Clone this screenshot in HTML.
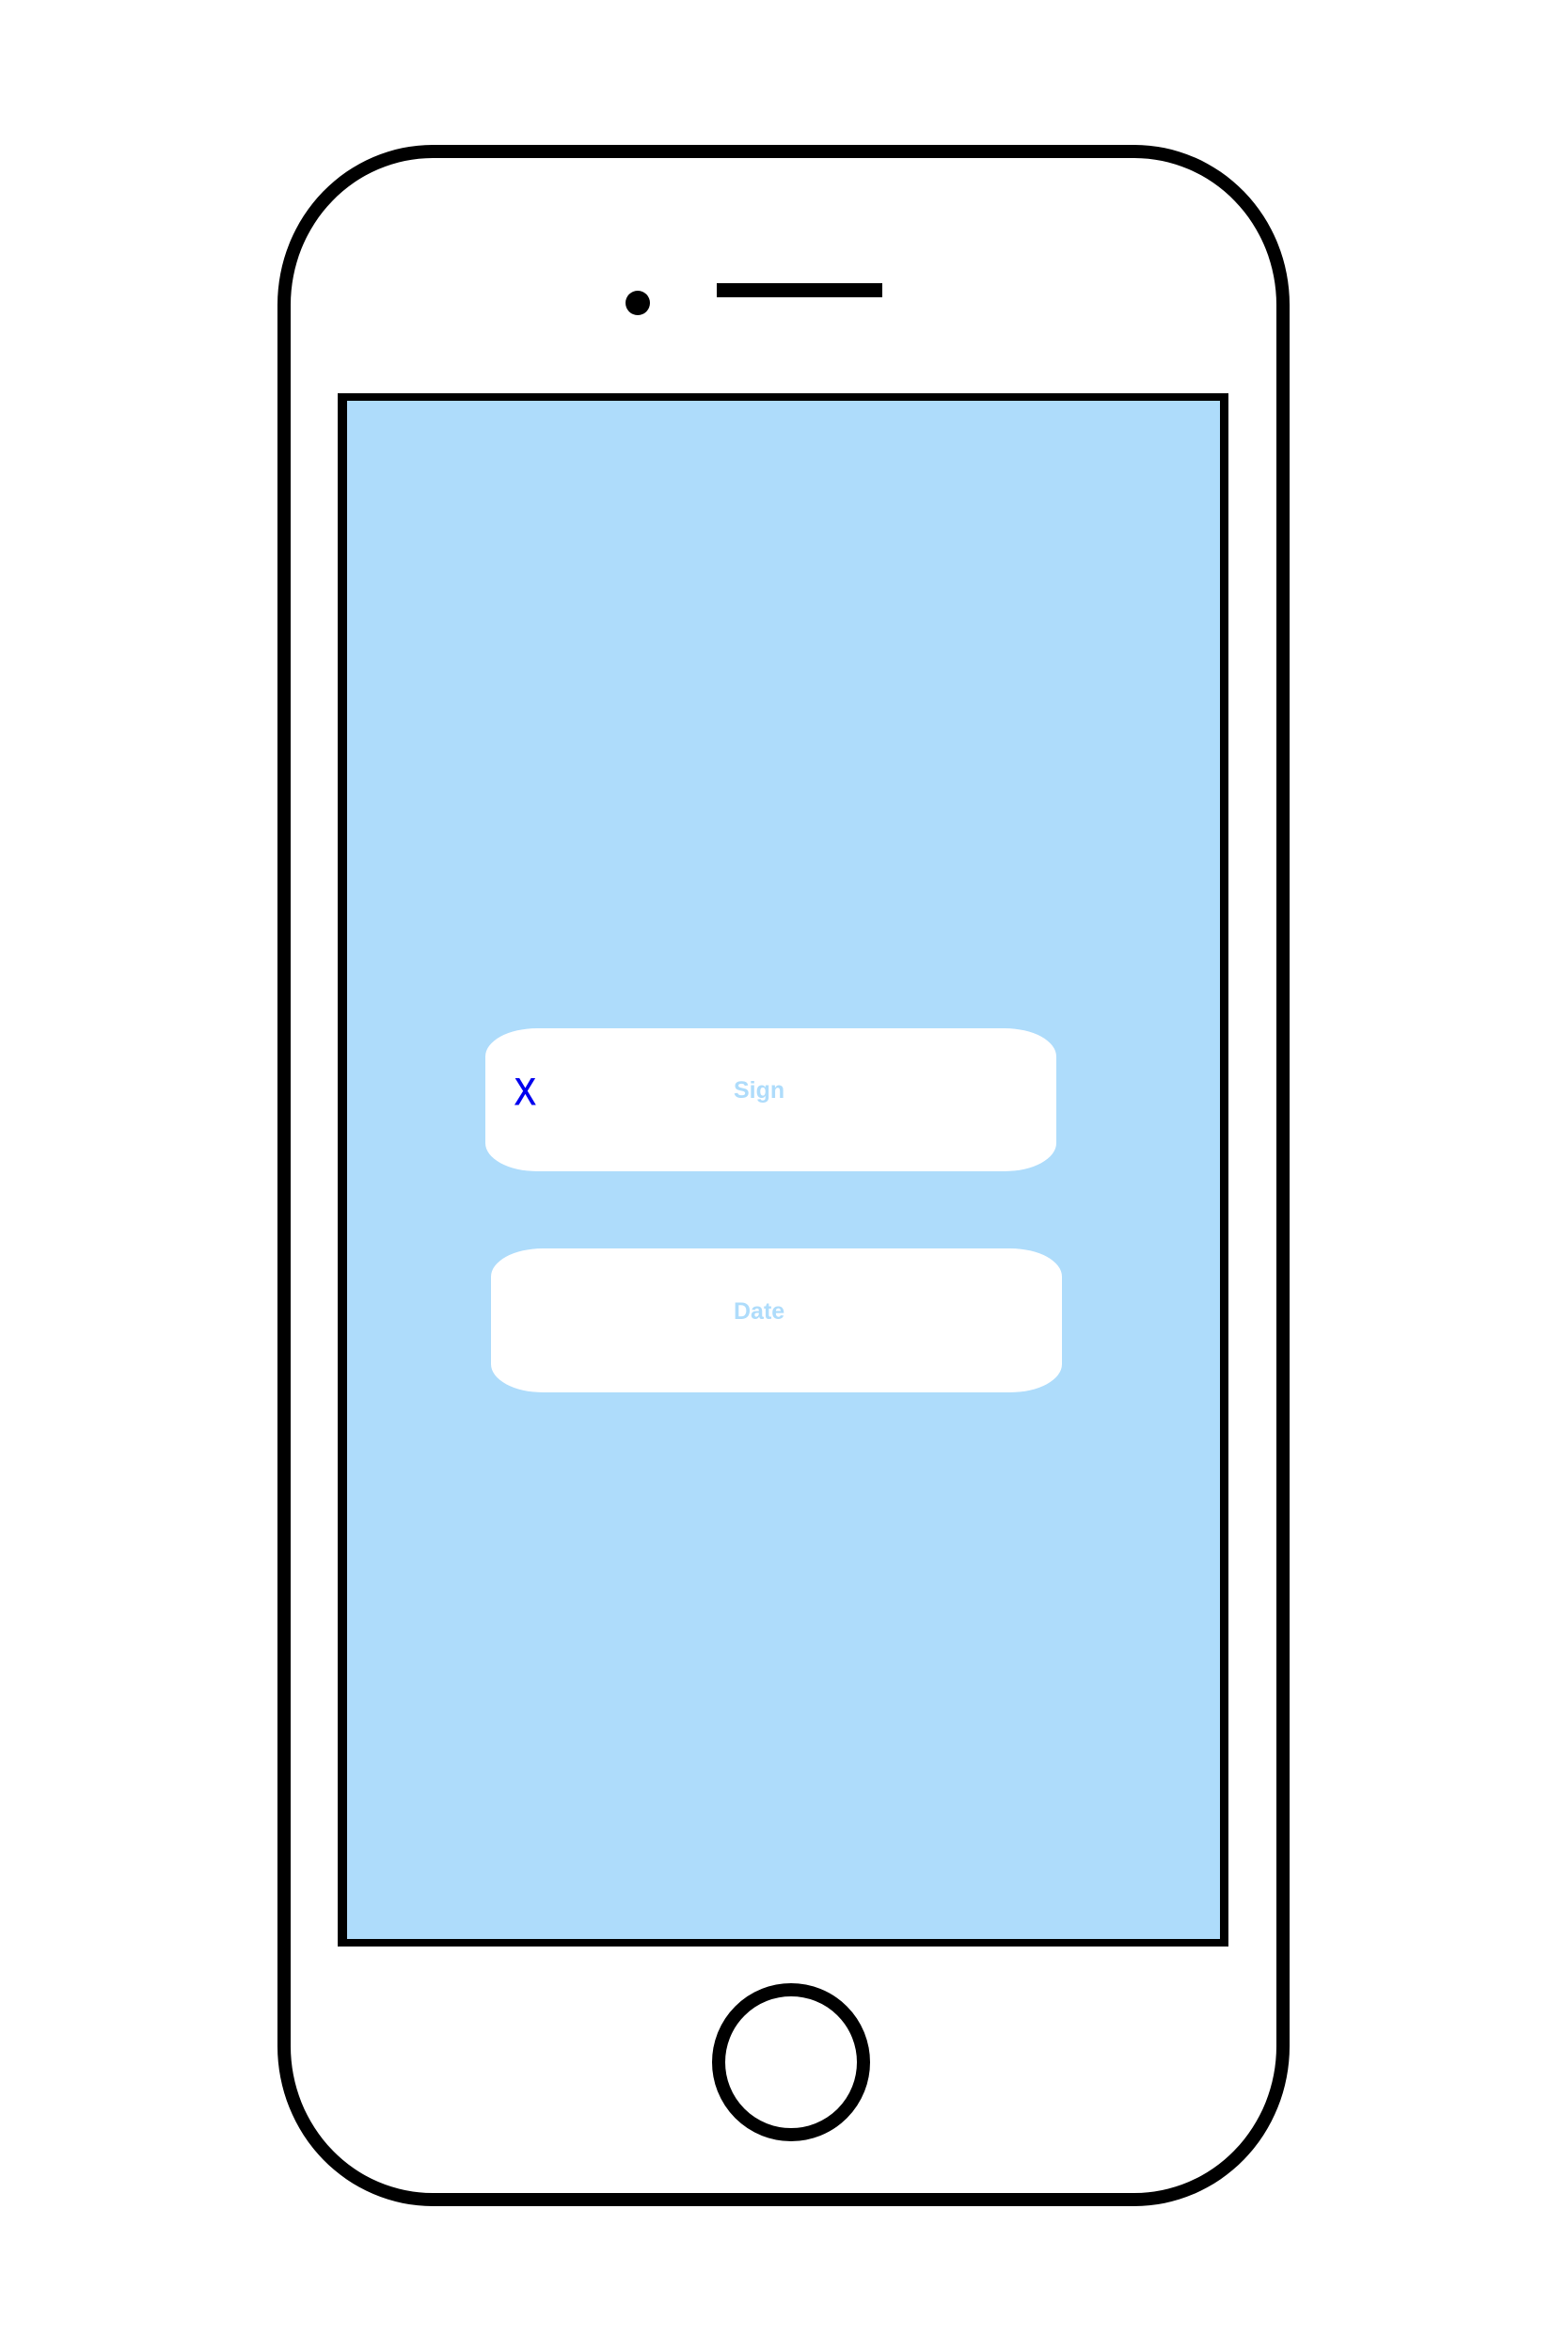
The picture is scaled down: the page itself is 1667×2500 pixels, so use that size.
<!DOCTYPE html>
<html><head><meta charset="utf-8"><style>
html,body{margin:0;padding:0;background:#fff;width:1667px;height:2500px;overflow:hidden;position:relative;font-family:"Liberation Sans",sans-serif}
.a{position:absolute;box-sizing:border-box}
</style></head><body>
<div class="a" style="left:295px;top:154px;width:1076px;height:2191px;border:14px solid #000;border-radius:165px/170px;"></div>
<div class="a" style="left:665px;top:309px;width:26px;height:26px;border-radius:50%;background:#000"></div>
<div class="a" style="left:762px;top:301px;width:176px;height:15px;background:#000"></div>
<div class="a" style="left:359px;top:418px;width:947px;height:1651px;border:8px solid #000;border-left-width:10px;border-right-width:9px;background:#aedcfb"></div>
<div class="a" style="left:516px;top:1093px;width:607px;height:152px;background:#fff;border-radius:55px/30px"></div>
<div class="a" style="left:522px;top:1327px;width:607px;height:153px;background:#fff;border-radius:55px/30px"></div>
<div class="a" style="left:547px;top:1138px;font-size:40px;line-height:46px;color:#0000ee;transform:scaleX(0.85);transform-origin:left;-webkit-text-stroke:1px #0000ee">X</div>
<div class="a" style="left:780px;top:1145px;font-size:25px;line-height:28px;font-weight:bold;color:#aedcfb">Sign</div>
<div class="a" style="left:780px;top:1380px;font-size:25px;line-height:28px;font-weight:bold;color:#aedcfb">Date</div>
<div class="a" style="left:757px;top:2108px;width:168px;height:168px;border:14px solid #000;border-radius:50%"></div>
</body></html>
